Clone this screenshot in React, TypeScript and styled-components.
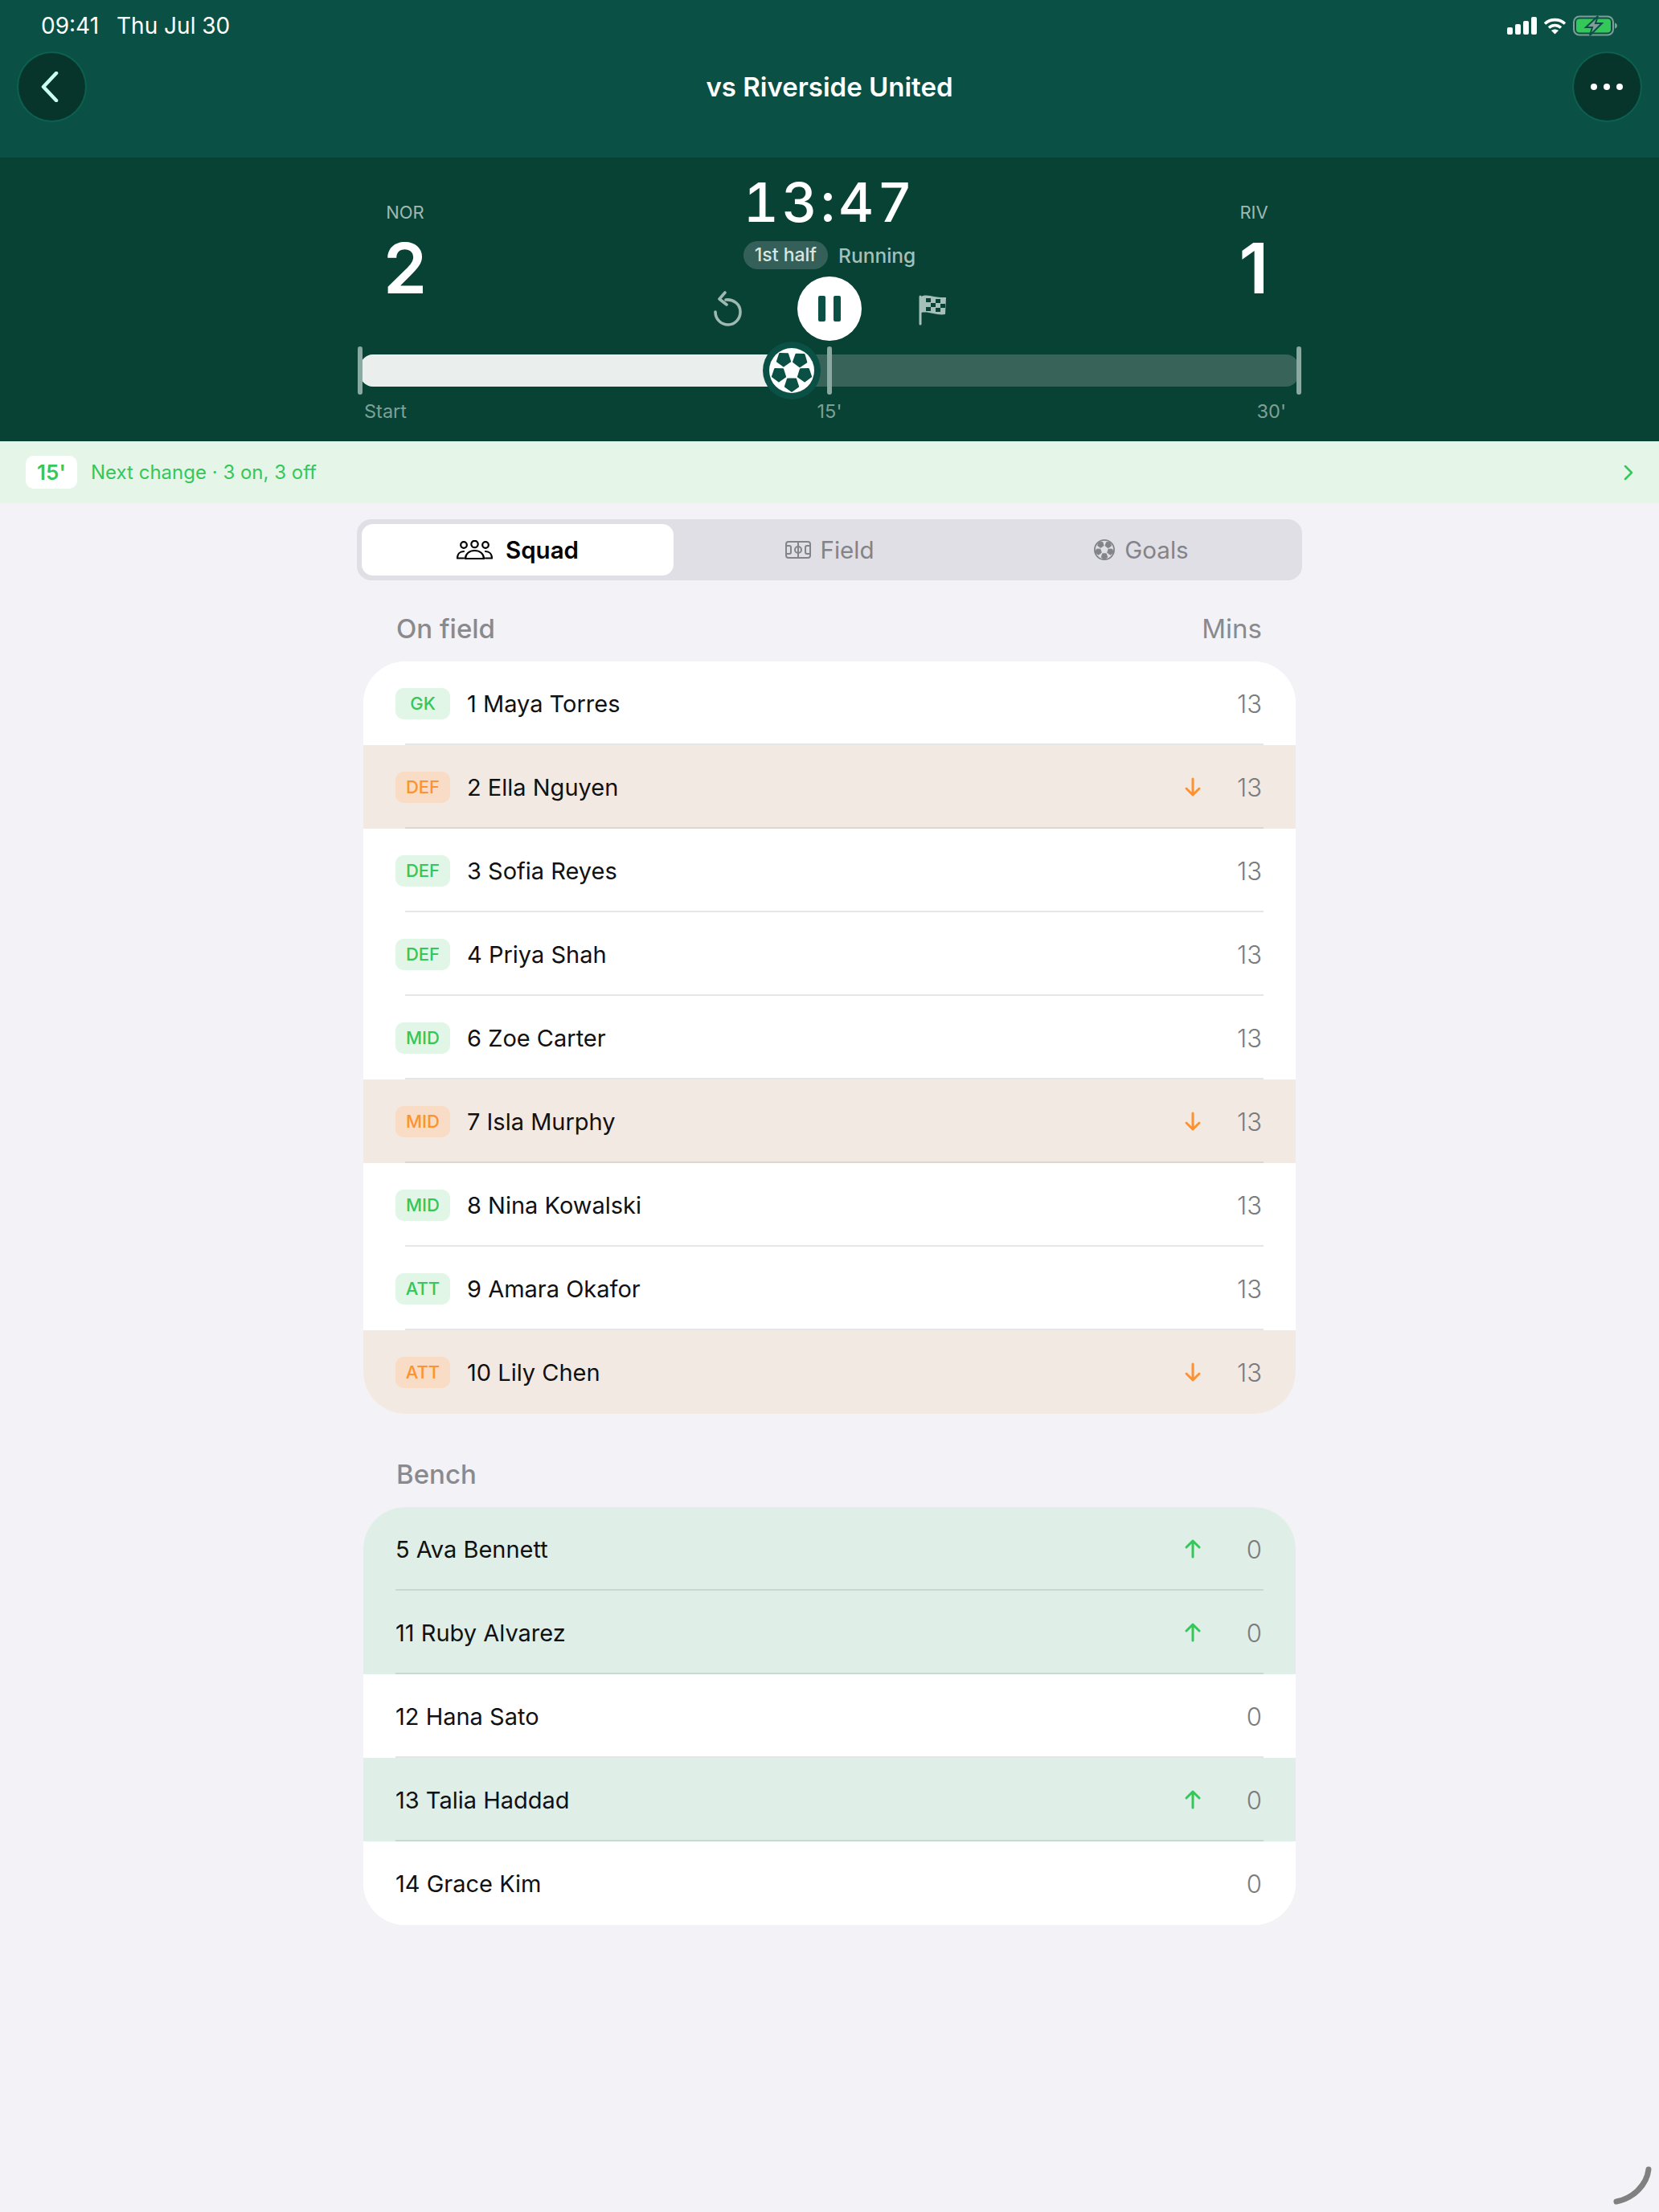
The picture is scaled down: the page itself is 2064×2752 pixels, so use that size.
import styled, { createGlobalStyle } from "styled-components";

const GlobalStyle = createGlobalStyle`
  html, body { margin: 0; padding: 0; background: #f2f2f7; }
  body { font-family: Inter, "Noto Sans", sans-serif; -webkit-font-smoothing: antialiased; }
`;

const Page = styled.div`
  position: relative;
  width: 2064px;
  height: 2752px;
  overflow: hidden;
  background: #f2f2f7;
`;

const TopBar = styled.header`
  height: 196px;
  box-sizing: border-box;
  padding: 0 21px;
  background: #0a5044;
  display: flex;
  flex-direction: column;
`;

const StatusRow = styled.div`
  height: 64px;
  box-sizing: border-box;
  padding: 0 31px 0 30px;
  display: flex;
  align-items: center;
  justify-content: space-between;
  color: #fff;
  font-size: 28px;
`;

const StatusText = styled.div`
  display: flex;
  gap: 22px;
`;

const StatusIcons = styled.div`
  display: flex;
  align-items: center;
  gap: 8px;
`;

const NavRow = styled.div`
  height: 88px;
  display: flex;
  align-items: center;
  justify-content: space-between;
`;

const NavTitle = styled.h1`
  margin: 0;
  color: #fff;
  font-size: 33px;
  font-weight: 600;
`;

const RoundButton = styled.button`
  width: 87px;
  height: 88px;
  padding: 0;
  border-radius: 50%;
  border: 2px solid #0c604f;
  background: #07352b;
  display: flex;
  align-items: center;
  justify-content: center;
`;

const BackIcon = styled.svg`
  margin-right: 6px;
`;

const Board = styled.section`
  height: 353px;
  box-sizing: border-box;
  background: #084235;
  padding: 21px 444px 0;
`;

const ScoreRow = styled.div`
  height: 224px;
  padding: 0 24px;
  display: flex;
  justify-content: space-between;
`;

const Team = styled.div`
  width: 72px;
  padding-top: 33px;
  display: flex;
  flex-direction: column;
  align-items: center;
`;

const TeamCode = styled.div`
  color: #9db9b0;
  font-size: 22px;
  line-height: 28px;
`;

const TeamScore = styled.div`
  color: #fff;
  font-size: 87px;
  font-weight: 600;
  line-height: 92px;
  margin-top: 10px;
`;

const Center = styled.div`
  display: flex;
  flex-direction: column;
  align-items: center;
`;

const Clock = styled.div`
  color: #fff;
  font-size: 68px;
  font-weight: 500;
  line-height: 68px;
  letter-spacing: 4px;
  font-variant-numeric: tabular-nums;
`;

const StatusLine = styled.div`
  display: flex;
  align-items: center;
  gap: 13px;
  margin-top: 15px;
`;

const HalfPill = styled.span`
  height: 35px;
  padding: 0 14px;
  border-radius: 18px;
  background: #35605a;
  color: #d8e5e1;
  font-size: 23px;
  font-weight: 500;
  line-height: 35px;
`;

const RunText = styled.span`
  color: #a5c0b8;
  font-size: 24.5px;
  font-weight: 500;
`;

const Controls = styled.div`
  display: flex;
  align-items: center;
  gap: 68px;
  margin-top: 9px;
`;

const FlagIcon = styled.svg`
  overflow: visible;
`;

const PauseButton = styled.button`
  width: 80px;
  height: 80px;
  padding: 0;
  border: 0;
  border-radius: 50%;
  background: #fff;
  display: flex;
  align-items: center;
  justify-content: center;
  gap: 10px;
`;

const PauseBar = styled.span`
  width: 9px;
  height: 32px;
  border-radius: 2px;
  background: #0a5044;
`;

const Track = styled.div`
  position: relative;
  height: 40px;
  margin: 0 4px;
  border-radius: 16px;
  background: #376359;
`;

const TrackFill = styled.div`
  height: 100%;
  border-radius: 16px 0 0 16px;
  background: #eaefed;
`;

const Tick = styled.span<{ $at: string }>`
  position: absolute;
  top: -10px;
  left: ${(p) => p.$at};
  width: 6px;
  height: 60px;
  margin-left: -3px;
  border-radius: 3px;
  background: #8aa9a0;
`;

const Ball = styled.div`
  position: absolute;
  top: -16px;
  left: 501px;
  width: 72px;
  height: 72px;
`;

const TrackLabels = styled.div`
  display: grid;
  grid-template-columns: 1fr auto 1fr;
  padding: 17px 20px 0;
  color: #7da096;
  font-size: 23.5px;
  line-height: 27px;
`;

const StartLabel = styled.span`
  margin-left: -11px;
`;

const EndLabel = styled.span`
  text-align: right;
`;

const Banner = styled.div`
  height: 77px;
  box-sizing: border-box;
  padding: 0 32px;
  background: #e5f6e9;
  display: flex;
  align-items: center;
  color: #34c759;
  font-size: 24px;
`;

const BannerBadge = styled.span`
  width: 64px;
  height: 41px;
  border-radius: 10px;
  background: #fff;
  font-weight: 600;
  font-size: 26px;
  line-height: 41px;
  text-align: center;
  margin-right: 17px;
`;

const BannerText = styled.span`
  flex: 1;
`;

const Content = styled.main`
  width: 1176px;
  margin: 20px auto 0;
`;

const Segments = styled.div`
  height: 76px;
  box-sizing: border-box;
  padding: 6px;
  border-radius: 18px;
  background: #dfdfe5;
  display: grid;
  grid-template-columns: repeat(3, 1fr);
`;

const Segment = styled.div<{ $active?: boolean }>`
  border-radius: 14px;
  display: flex;
  align-items: center;
  justify-content: center;
  gap: ${(p) => (p.$active ? "16px" : "12px")};
  font-size: 29.5px;
  background: ${(p) => (p.$active ? "#fff" : "transparent")};
  color: ${(p) => (p.$active ? "#000" : "#83838a")};
  font-weight: ${(p) => (p.$active ? 600 : 400)};
`;

const SectionHead = styled.div<{ $first?: boolean }>`
  height: 42px;
  margin-top: ${(p) => (p.$first ? "39px" : "54px")};
  margin-bottom: 20px;
  padding: 0 50px 0 49px;
  display: flex;
  justify-content: space-between;
  align-items: center;
  color: #8a8a8e;
  font-size: 33px;
  font-weight: 500;
`;

const MinsHead = styled.span`
  font-weight: 400;
`;

const List = styled.div`
  margin: 0 8px;
  border-radius: 52px;
  overflow: hidden;
  background: #fff;
`;

const toneBg = { out: "#f3e9e3", in: "#dfeee7", plain: "#fff" };
const toneLine = { out: "#ddd5d0", in: "#c9d9d2", plain: "#e6e6e8" };

const Row = styled.div<{ $tone: "out" | "in" | "plain"; $inset: number }>`
  position: relative;
  height: 104px;
  box-sizing: border-box;
  padding: 0 42px 0 40px;
  display: flex;
  align-items: center;
  background: ${(p) => toneBg[p.$tone]};

  &:not(:last-child)::after {
    content: "";
    position: absolute;
    right: 40px;
    bottom: 0;
    left: ${(p) => p.$inset}px;
    height: 2px;
    background: ${(p) => toneLine[p.$tone]};
  }
`;

const PosBadge = styled.span<{ $out?: boolean }>`
  width: 68px;
  height: 39px;
  margin-right: 21px;
  border-radius: 10px;
  background: ${(p) => (p.$out ? "#f8dcc6" : "#e2f6e7")};
  color: ${(p) => (p.$out ? "#ff9230" : "#34c759")};
  font-size: 22px;
  font-weight: 500;
  line-height: 39px;
  text-align: center;
`;

const Name = styled.span`
  flex: 1;
  color: #111;
  font-size: 29px;
`;

const Arrow = styled.svg`
  width: 24px;
  height: 26px;
  margin-right: 30px;
`;

const Mins = styled.span`
  width: 44px;
  text-align: right;
  color: #7c7c80;
  font-size: 31px;
  font-weight: 300;
`;

const Pointer = styled.svg`
  position: absolute;
  right: 8px;
  bottom: 8px;
  width: 50px;
  height: 50px;
`;

// spots of the ball in a 56 box, each with one corner turned away from the middle
const spots = [
  [18, 14],
  [38.300, 14.700],
  [12, 33],
  [44, 33],
  [28, 45.300],
];

function spotPoints(cx: number, cy: number, r: number) {
  const start = Math.atan2(cy - 28, cx - 28);
  const pts: string[] = [];
  for (let i = 0; i < 5; i++) {
    const a = start + (i * 2 * Math.PI) / 5;
    pts.push(`${(cx + r * Math.cos(a)).toFixed(1)},${(cy + r * Math.sin(a)).toFixed(1)}`);
  }
  return pts.join(" ");
}

function BallIcon({ size, ink, ring }: { size: number; ink: string; ring?: boolean }) {
  return (
    <svg width={size} height={size} viewBox="0 0 56 56">
      {ring ? (
        <circle cx="28" cy="28" r="26" fill="none" stroke={ink} strokeWidth="4" />
      ) : (
        <circle cx="28" cy="28" r="28" fill="#fff" />
      )}
      <g fill={ink} stroke={ink} strokeWidth="2" strokeLinejoin="round">
        {spots.map(([x, y]) => (
          <polygon key={x} points={spotPoints(x, y, 8.500)} />
        ))}
      </g>
    </svg>
  );
}

const squad = [
  { pos: "GK", name: "1 Maya Torres" },
  { pos: "DEF", name: "2 Ella Nguyen", out: true },
  { pos: "DEF", name: "3 Sofia Reyes" },
  { pos: "DEF", name: "4 Priya Shah" },
  { pos: "MID", name: "6 Zoe Carter" },
  { pos: "MID", name: "7 Isla Murphy", out: true },
  { pos: "MID", name: "8 Nina Kowalski" },
  { pos: "ATT", name: "9 Amara Okafor" },
  { pos: "ATT", name: "10 Lily Chen", out: true },
];

const bench = [
  { name: "5 Ava Bennett", sub: true },
  { name: "11 Ruby Alvarez", sub: true },
  { name: "12 Hana Sato" },
  { name: "13 Talia Haddad", sub: true },
  { name: "14 Grace Kim" },
];

const App = () => {
  return (
    <Page>
      <GlobalStyle />
      <TopBar>
        <StatusRow>
          <StatusText>
            <span>09:41</span>
            <span>Thu Jul 30</span>
          </StatusText>
          <StatusIcons>
            <svg width="37" height="22" viewBox="0 0 37 22" fill="#fff">
              <rect x="0" y="13" width="7" height="9" rx="2" />
              <rect x="10" y="9" width="7" height="13" rx="2" />
              <rect x="20" y="5" width="7" height="17" rx="2" />
              <rect x="30" y="0" width="7" height="22" rx="2" />
            </svg>
            <svg width="29" height="21" viewBox="0 0 29 21" fill="none" stroke="#fff" strokeWidth="3.600">
              <path d="M2 7.500c7-6.500 18-6.500 25 0" />
              <path d="M7 12.500c4.500-4 10.500-4 15 0" />
              <path d="M14.500 20.500l-4.500-4.500c2.500-2 6.500-2 9 0z" fill="#fff" stroke="none" />
            </svg>
            <svg width="55" height="26" viewBox="0 0 55 26">
              <rect x="1" y="1.500" width="49" height="23" rx="7" fill="none" stroke="#7f9f96" strokeWidth="2" />
              <rect x="4" y="4.500" width="43" height="17" rx="4" fill="#34c759" />
              <path d="M52 9.500c2 .5 3 2 3 3.500s-1 3-3 3.500z" fill="#7f9f96" />
              <path d="M31 1L16 15h8l-3 10 15-15h-8z" fill="#7f9f96" stroke="#0a5044" strokeWidth="2" />
            </svg>
          </StatusIcons>
        </StatusRow>
        <NavRow>
          <RoundButton aria-label="Back">
            <BackIcon width="24" height="38" viewBox="0 0 24 38" fill="none" stroke="#c9fff0" strokeWidth="4.500" strokeLinecap="round" strokeLinejoin="round">
              <path d="M20 2L4 19l16 17" />
            </BackIcon>
          </RoundButton>
          <NavTitle>vs Riverside United</NavTitle>
          <RoundButton aria-label="More">
            <svg width="40" height="8" viewBox="0 0 40 8" fill="#fff">
              <circle cx="4" cy="4" r="4" />
              <circle cx="20" cy="4" r="4" />
              <circle cx="36" cy="4" r="4" />
            </svg>
          </RoundButton>
        </NavRow>
      </TopBar>

      <Board>
        <ScoreRow>
          <Team>
            <TeamCode>NOR</TeamCode>
            <TeamScore>2</TeamScore>
          </Team>
          <Center>
            <Clock>13:47</Clock>
            <StatusLine>
              <HalfPill>1st half</HalfPill>
              <RunText>Running</RunText>
            </StatusLine>
            <Controls>
              <svg width="36" height="44" viewBox="0 0 36 44" fill="none" stroke="#9db9b0" strokeWidth="3.600" strokeLinecap="round" strokeLinejoin="round">
                <path d="M15 11c9-1 18 5 18 15 0 9-7 16-15 16S2 36 2 26" />
                <path d="M14 2L7 10l9 7" />
              </svg>
              <PauseButton aria-label="Pause">
                <PauseBar />
                <PauseBar />
              </PauseButton>
              <FlagIcon width="36" height="38" viewBox="-3 0 36 38">
                <path d="M2 38L2 4" fill="none" stroke="#a5c0b8" strokeWidth="3" strokeLinecap="round" />
                <path d="M3 4c5-3 11-1 16 0s11 1 15 1l-1 21c-5 1-10 0-15-1s-10-2-15-1z" fill="#a5c0b8" />
                <g fill="#084235">
                  <rect x="9" y="6" width="6" height="5" />
                  <rect x="21" y="7" width="6" height="5" />
                  <rect x="15" y="12" width="6" height="5" />
                  <rect x="27" y="13" width="6" height="5" />
                  <rect x="9" y="17" width="6" height="5" />
                  <rect x="21" y="18" width="6" height="5" />
                </g>
              </FlagIcon>
            </Controls>
          </Center>
          <Team>
            <TeamCode>RIV</TeamCode>
            <TeamScore>1</TeamScore>
          </Team>
        </ScoreRow>
        <Track>
          <TrackFill style={{ width: `${(537 / 1168) * 100}%` }} />
          <Tick $at="0%" />
          <Tick $at="50%" />
          <Tick $at="100%" />
          <Ball>
            <svg width="72" height="72" viewBox="0 0 72 72">
              <circle cx="36" cy="36" r="36" fill="#0a5044" />
              <g transform="translate(8 8)">
                <BallIcon size={56} ink="#0a5044" />
              </g>
            </svg>
          </Ball>
        </Track>
        <TrackLabels>
          <StartLabel>Start</StartLabel>
          <span>15'</span>
          <EndLabel>30'</EndLabel>
        </TrackLabels>
      </Board>

      <Banner>
        <BannerBadge>15'</BannerBadge>
        <BannerText>Next change · 3 on, 3 off</BannerText>
        <svg width="12" height="20" viewBox="0 0 12 20" fill="none" stroke="#34c759" strokeWidth="2.500" strokeLinecap="round" strokeLinejoin="round">
          <path d="M2 2l8 8-8 8" />
        </svg>
      </Banner>

      <Content>
        <Segments>
          <Segment $active>
            <svg width="45" height="24" viewBox="0 0 45 24" fill="none" stroke="#000" strokeWidth="2.200" strokeLinecap="round" strokeLinejoin="round">
              <circle cx="9" cy="6" r="3.800" />
              <circle cx="22.500" cy="5" r="4.200" />
              <circle cx="36" cy="6" r="3.800" />
              <path d="M9 22.500H1c0-5 3-8.500 8-8.500" />
              <path d="M36 22.500h8c0-5-3-8.500-8-8.500" />
              <path d="M11 23c0-6 5-10 11.500-10S34 17 34 23z" />
            </svg>
            Squad
          </Segment>
          <Segment>
            <svg width="32" height="22" viewBox="0 0 32 22" fill="none" stroke="#83838a" strokeWidth="2">
              <rect x="1" y="1" width="30" height="20" rx="3" />
              <path d="M16 1v20M1 6h4c1 0 2 1 2 2v6c0 1-1 2-2 2H1M31 6h-4c-1 0-2 1-2 2v6c0 1 1 2 2 2h4" />
              <circle cx="16" cy="11" r="4" />
            </svg>
            Field
          </Segment>
          <Segment>
            <BallIcon size={26} ink="#83838a" ring />
            Goals
          </Segment>
        </Segments>

        <SectionHead $first>
          <span>On field</span>
          <MinsHead>Mins</MinsHead>
        </SectionHead>
        <List>
          {squad.map((p) => (
            <Row key={p.name} $tone={p.out ? "out" : "plain"} $inset={52}>
              <PosBadge $out={p.out}>{p.pos}</PosBadge>
              <Name>{p.name}</Name>
              {p.out && (
                <Arrow viewBox="0 0 24 26" fill="none" stroke="#ff9230" strokeWidth="3" strokeLinecap="round" strokeLinejoin="round">
                  <path d="M12 3v20M4 15l8 8 8-8" />
                </Arrow>
              )}
              <Mins>13</Mins>
            </Row>
          ))}
        </List>

        <SectionHead>
          <span>Bench</span>
        </SectionHead>
        <List>
          {bench.map((p) => (
            <Row key={p.name} $tone={p.sub ? "in" : "plain"} $inset={40}>
              <Name>{p.name}</Name>
              {p.sub && (
                <Arrow viewBox="0 0 24 26" fill="none" stroke="#34c759" strokeWidth="3" strokeLinecap="round" strokeLinejoin="round">
                  <path d="M12 23V3M4 11l8-8 8 8" />
                </Arrow>
              )}
              <Mins>0</Mins>
            </Row>
          ))}
        </List>
      </Content>

      <Pointer viewBox="0 0 50 50" fill="none" stroke="#808080" strokeWidth="7" strokeLinecap="round">
        <path d="M45 5c-2 18-18 36-40 40" />
      </Pointer>
    </Page>
  );
};

export default App;
